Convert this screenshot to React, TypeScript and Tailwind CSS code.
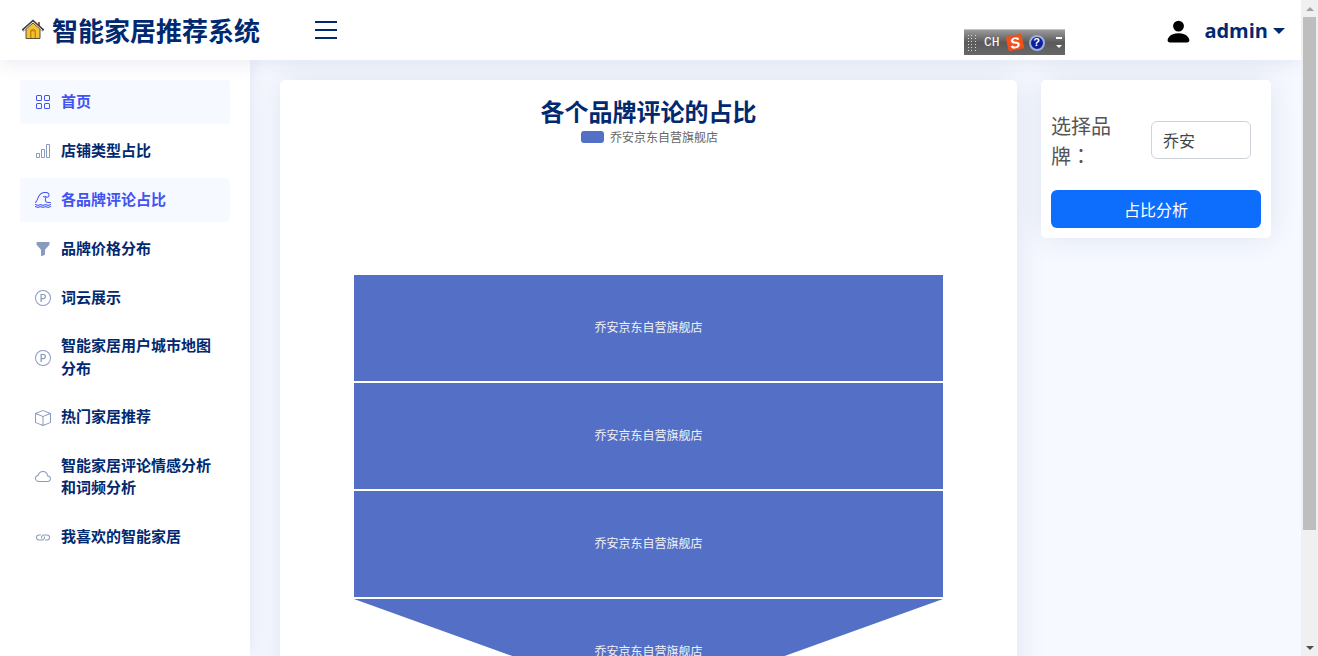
import type { ReactNode } from "react";
import {
  BsGrid,
  BsBarChart,
  BsTsunami,
  BsFunnelFill,
  BsPCircle,
  BsBox,
  BsCloud,
  BsLink,
  BsPersonFill,
} from "react-icons/bs";

const cjk = "font-['Noto_Sans_CJK_SC','Liberation_Sans',sans-serif]";

interface NavItem {
  icon: ReactNode;
  label: string;
  active?: boolean;
}

const navItems: NavItem[] = [
  { icon: <BsGrid />, label: "首页", active: true },
  { icon: <BsBarChart />, label: "店铺类型占比" },
  { icon: <BsTsunami />, label: "各品牌评论占比", active: true },
  { icon: <BsFunnelFill />, label: "品牌价格分布" },
  { icon: <BsPCircle />, label: "词云展示" },
  { icon: <BsPCircle />, label: "智能家居用户城市地图分布" },
  { icon: <BsBox />, label: "热门家居推荐" },
  { icon: <BsCloud />, label: "智能家居评论情感分析和词频分析" },
  { icon: <BsLink />, label: "我喜欢的智能家居" },
];

function HouseLogo() {
  return (
    <svg width="24" height="24" viewBox="0 0 24 24" className="shrink-0">
      <rect x="17" y="4" width="2" height="5" fill="#c0503a" />
      <path d="M5 11 L12 5 L19 11 V20.5 H5 Z" fill="#f2c230" stroke="#5a5140" strokeWidth="1" />
      <path d="M9 20 V14 A3 3 0 0 1 15 14 V20 Z" fill="#c9860f" />
      <path d="M10.5 20 V14.5 A1.5 1.5 0 0 1 13.5 14.5 V20 Z" fill="#f2c230" />
      <path d="M1.5 12.5 L12 3 L22.5 12.5" fill="none" stroke="#3f3f3f" strokeWidth="2.4" />
      <path d="M2.5 12.5 L12 4 L21.5 12.5" fill="none" stroke="#ffffff" strokeWidth="0.9" />
    </svg>
  );
}

function ImeToolbar() {
  return (
    <div className="absolute left-[964px] top-[29px] flex h-[26px] w-[101px] items-center border-t border-[#c4c4c4] bg-gradient-to-b from-[#9a9a9a] via-[#5a5a5a] to-[#686868]">
      <div className="ml-[4px] grid w-[8px] grid-cols-3 gap-x-[2px] gap-y-[2px]">
        {Array.from({ length: 18 }).map((_, i) => (
          <span key={i} className="h-px w-px bg-[#d8d8d8]" />
        ))}
      </div>
      <span className="ml-[8px] font-['Liberation_Mono',monospace] text-[13px] leading-none text-white">CH</span>
      <span className="ml-[7px] flex h-[15px] w-[16px] -rotate-12 items-center justify-center rounded-[2px] bg-[#f0501a] font-['Liberation_Sans',sans-serif] text-[15px] font-bold italic leading-none text-white">
        S
      </span>
      <span className="ml-[6px] flex h-[16px] w-[16px] items-center justify-center rounded-full border-2 border-[#9fb0dd] bg-[#0b1f9c] font-['Liberation_Sans',sans-serif] text-[11px] font-bold leading-none text-white">
        ?
      </span>
      <div className="ml-[11px] flex flex-col items-center gap-[6px]">
        <span className="h-[2px] w-[6px] bg-white" />
        <span className="h-0 w-0 border-x-[3px] border-t-[3px] border-x-transparent border-t-white" />
      </div>
    </div>
  );
}

function Header() {
  return (
    <header className="relative z-20 flex h-[60px] shrink-0 items-center bg-white pl-[21px] pr-[16px] shadow-[0_2px_20px_rgba(1,41,112,0.1)]">
      <HouseLogo />
      <h1 className={`ml-[7px] text-[26px] font-bold leading-none text-[#012970] ${cjk}`}>智能家居推荐系统</h1>
      <svg width="22" height="18" viewBox="0 0 22 18" className="ml-[55px]">
        <path d="M0 1 H22 M0 9 H22 M0 17 H22" stroke="#012970" strokeWidth="2" />
      </svg>
      <ImeToolbar />
      <div className="ml-auto mt-[2px] flex items-center">
        <BsPersonFill className="text-[29px] text-black" />
        <span className="ml-[11px] font-['Open_Sans',sans-serif] text-[20px] font-bold leading-none text-[#012970]">admin</span>
        <span className="ml-[5px] h-0 w-0 border-x-[6px] border-t-[6px] border-x-transparent border-t-[#012970]" />
      </div>
    </header>
  );
}

function Sidebar() {
  return (
    <aside className="relative z-10 flex w-[250px] shrink-0 flex-col gap-[5px] bg-white p-[20px] shadow-[0_0_20px_rgba(1,41,112,0.1)]">
      {navItems.map((item, i) => (
        <a
          key={i}
          className={`flex min-h-[44px] items-center gap-[10px] rounded-[4px] py-[9px] pl-[15px] pr-[15px] text-[15px] font-semibold leading-[22.75px] ${cjk} ${
            item.active ? "bg-[#f6f9ff] text-[#4154f1]" : "text-[#012970]"
          }`}
        >
          <span className={`shrink-0 text-[16px] ${item.active ? "text-[#4154f1]" : "text-[#899bbd]"}`}>{item.icon}</span>
          <span className="pb-[2px]">{item.label}</span>
        </a>
      ))}
    </aside>
  );
}

const funnelLabel = "乔安京东自营旗舰店";

function FunnelChart() {
  const bars = [
    { points: "74,0 663,0 663,106 74,106", y: 51 },
    { points: "74,108 663,108 663,214 74,214", y: 159 },
    { points: "74,216 663,216 663,322 74,322", y: 267 },
    { points: "74,324 663,324 368.5,430", y: 375 },
  ];
  return (
    <svg width="737" height="440" viewBox="0 0 737 440" className="mt-[131px] block">
      {bars.map((b, i) => (
        <g key={i}>
          <polygon points={b.points} fill="#5470c6" />
          <text
            x="368.5"
            y={b.y}
            textAnchor="middle"
            dominantBaseline="central"
            fontSize="12"
            fill="#f0f0f5"
            fontFamily="'Noto Sans CJK SC', sans-serif"
          >
            {funnelLabel}
          </text>
        </g>
      ))}
    </svg>
  );
}

function ChartCard() {
  return (
    <section className="w-[737px] shrink-0 rounded-[5px] bg-white shadow-[0_0_30px_rgba(1,41,112,0.1)]">
      <h2 className={`mb-[1px] pt-[12px] text-center text-[24px] font-bold leading-[37px] text-[#012970] ${cjk}`}>各个品牌评论的占比</h2>
      <div className="flex items-center justify-center gap-[6px] pl-[2px]">
        <span className="h-[12px] w-[23px] rounded-[3px] bg-[#5470c6]" />
        <span className={`text-[12px] leading-[14px] text-[#666666] ${cjk}`}>{funnelLabel}</span>
      </div>
      <FunnelChart />
    </section>
  );
}

function BrandPanel() {
  return (
    <section className="h-[158px] w-[230px] shrink-0 rounded-[5px] bg-white p-[10px] shadow-[0_0_30px_rgba(1,41,112,0.1)]">
      <div className={`mt-[21px] flex items-center ${cjk}`}>
        <label className="w-[100px] pr-[30px] font-['Noto_Sans_CJK_TC',sans-serif] text-[20px] leading-[30px] text-[#555555]">选择品牌：</label>
        <div className="-mt-[2px] flex h-[38px] w-[100px] items-center rounded-[6px] border border-[#ced4da] pl-[11px] text-[16px] text-[#444444]">
          乔安
        </div>
      </div>
      <button className={`mt-[19px] h-[38px] w-[210px] rounded-[6px] bg-[#0d6efd] text-[16px] text-white ${cjk}`}>占比分析</button>
    </section>
  );
}

function Scrollbar() {
  return (
    <div className="z-30 flex h-[656px] w-[17px] shrink-0 flex-col items-center bg-[#f0f0f0]">
      <div className="flex h-[17px] items-center justify-center">
        <span className="h-0 w-0 border-x-[4px] border-b-[4px] border-x-transparent border-b-[#a3a3a3]" />
      </div>
      <div className="h-[513px] w-[13px] bg-[#bebebe]" />
      <div className="mt-auto flex h-[17px] items-center justify-center">
        <span className="h-0 w-0 border-x-[4px] border-t-[4px] border-x-transparent border-t-[#505050]" />
      </div>
    </div>
  );
}

export default function App() {
  return (
    <div className="flex h-[656px] w-[1318px] overflow-hidden">
      <div className="flex w-[1301px] shrink-0 flex-col">
        <Header />
        <div className="flex min-h-0 flex-1">
          <Sidebar />
          <main className="flex flex-1 items-start gap-[24px] overflow-hidden bg-[#f6f9ff] pl-[30px] pt-[20px]">
            <ChartCard />
            <BrandPanel />
          </main>
        </div>
      </div>
      <Scrollbar />
    </div>
  );
}
